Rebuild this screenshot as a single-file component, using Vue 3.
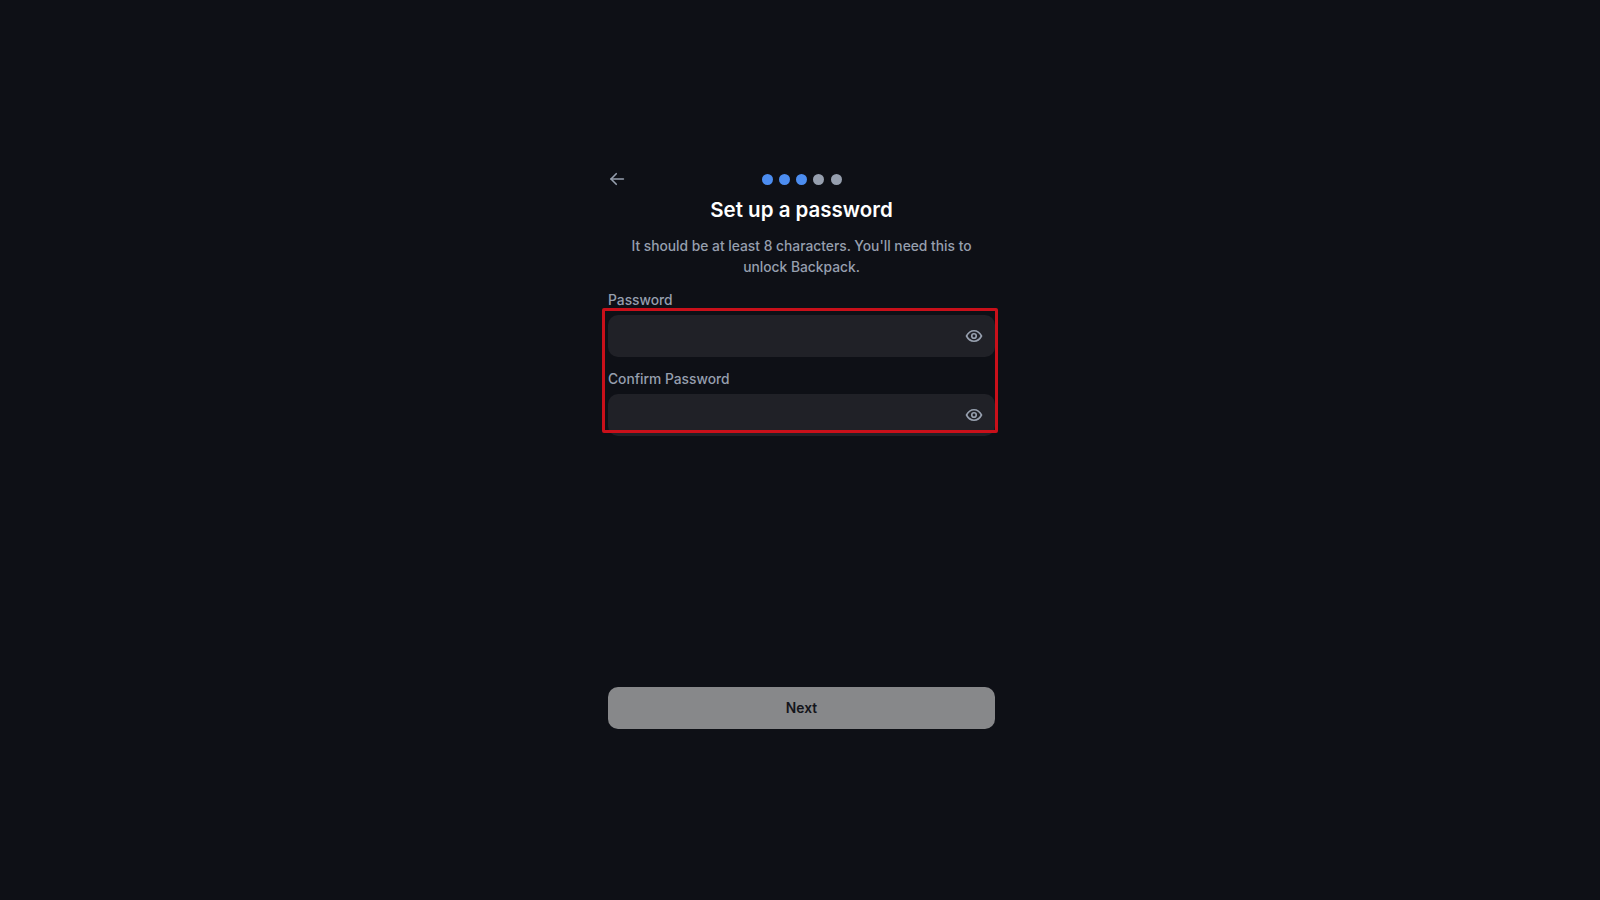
<script setup>
const steps = [true, true, true, false, false]
const fields = ['Password', 'Confirm Password']
</script>

<template>
  <main class="page">
    <section class="panel">
      <header class="top">
        <button class="back" type="button" aria-label="Back">
          <svg width="18" height="18" viewBox="0 0 24 24" fill="none" stroke="currentColor" stroke-width="2.2" stroke-linecap="round" stroke-linejoin="round">
            <path d="M20.5 12H4" />
            <path d="M11 5l-7 7 7 7" />
          </svg>
        </button>
        <div class="dots">
          <span v-for="(on, i) in steps" :key="i" class="dot" :class="{ on }"></span>
        </div>
      </header>
      <h1 class="title">Set up a password</h1>
      <p class="sub">It should be at least 8 characters. You'll need this to unlock Backpack.</p>
      <div class="form">
        <div class="highlight"></div>
        <div v-for="f in fields" :key="f" class="field">
          <label class="label">{{ f }}</label>
          <div class="input">
            <svg class="eye" width="18" height="18" viewBox="0 0 24 24" fill="none" stroke="currentColor" stroke-width="2.2" stroke-linecap="round" stroke-linejoin="round">
              <path d="M2 12s3.6-7 10-7 10 7 10 7-3.6 7-10 7-10-7-10-7z" />
              <circle cx="12" cy="12" r="3" />
            </svg>
          </div>
        </div>
      </div>
      <button class="next" type="button">Next</button>
    </section>
  </main>
</template>

<style>
html, body { margin: 0; background: #0e1016; }
</style>

<style scoped>
.page {
  width: 1600px;
  height: 900px;
  background: #0e1016;
  display: flex;
  justify-content: center;
  font-family: Inter, "Liberation Sans", sans-serif;
  overflow: hidden;
}
.panel {
  width: 387px;
  margin-left: 3px;
  padding-top: 168px;
  display: flex;
  flex-direction: column;
}
.top {
  height: 22px;
  position: relative;
  display: flex;
  justify-content: center;
  align-items: center;
}
.back {
  position: absolute;
  left: 0;
  top: 2px;
  width: 18px;
  height: 18px;
  padding: 0;
  background: none;
  border: 0;
  color: #969fae;
}
.dots { display: flex; gap: 6.25px; }
.dot { width: 11px; height: 11px; border-radius: 50%; background: #969fae; }
.dot.on { background: #4c8df0; }
.title {
  margin: 5px 0 0;
  font-size: 20.5px;
  line-height: 30px;
  font-weight: 600;
  color: #fff;
  text-align: center;
}
.sub {
  margin: 11px 16px 0;
  font-size: 13.8px;
  line-height: 21px;
  font-weight: 550;
  color: #969fae;
  text-align: center;
}
.form {
  position: relative;
  margin-top: 14px;
  display: flex;
  flex-direction: column;
  gap: 14px;
}
.highlight {
  position: absolute;
  left: -6px;
  right: -3px;
  top: 16px;
  height: 119px;
  border: 3px solid #c9101a;
  border-radius: 2px;
  z-index: 1;
}
.field { display: flex; flex-direction: column; gap: 7px; }
.label {
  font-size: 13.8px;
  line-height: 16px;
  font-weight: 550;
  color: #969fae;
}
.input {
  height: 42px;
  border-radius: 10px;
  background: #202127;
  display: flex;
  align-items: center;
  justify-content: flex-end;
  padding-right: 12px;
}
.eye { color: #969fae; }
.next {
  margin-top: 251px;
  height: 42px;
  border: 0;
  border-radius: 10px;
  background: #87888a;
  color: #14151b;
  font: 600 13.8px Inter, "Liberation Sans", sans-serif;
}
</style>
